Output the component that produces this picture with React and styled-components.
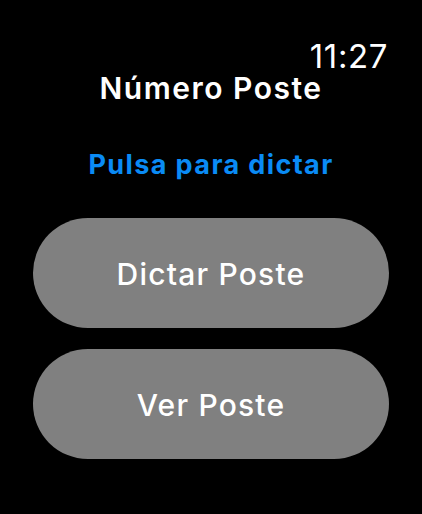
import React from "react";
import styled, { createGlobalStyle } from "styled-components";

const GlobalStyle = createGlobalStyle`
  html, body {
    margin: 0;
    padding: 0;
    background: #000;
  }
  body {
    font-family: Inter, "Noto Sans", sans-serif;
  }
`;

function App() {
  return (
    <>
      <GlobalStyle />
      <Screen>
        <StatusBar>
          <Time>11:27</Time>
        </StatusBar>
        <Title>Número Poste</Title>
        <Hint>Pulsa para dictar</Hint>
        <Actions>
          <PillButton>Dictar Poste</PillButton>
          <PillButton>Ver Poste</PillButton>
        </Actions>
      </Screen>
    </>
  );
}

export default App;

const Screen = styled.div`
  width: 422px;
  height: 514px;
  background: #000;
  color: #fff;
  display: flex;
  flex-direction: column;
  box-sizing: border-box;
  padding-top: 40px;
  overflow: hidden;
`;

const StatusBar = styled.div`
  display: flex;
  justify-content: flex-end;
  padding-right: 34px;
`;

const Time = styled.span`
  font-size: 33px;
  line-height: 33px;
  font-weight: 400;
  letter-spacing: 0.6px;
`;

const Title = styled.h1`
  margin: -3px 0 0;
  text-align: center;
  font-size: 30px;
  font-weight: 600;
  line-height: normal;
  letter-spacing: 1.5px;
`;

const Hint = styled.div`
  margin-top: 42px;
  text-align: center;
  font-size: 27px;
  font-weight: 700;
  color: #0a8bf5;
  line-height: normal;
  letter-spacing: 1.4px;
`;

const Actions = styled.div`
  margin-top: 37px;
  padding: 0 33px;
  display: flex;
  flex-direction: column;
  gap: 21px;
`;

const PillButton = styled.button`
  height: 110px;
  padding: 2px 0 0;
  border: none;
  border-radius: 55px;
  background: #808080;
  color: #fff;
  font-family: Inter, "Noto Sans", sans-serif;
  font-size: 30px;
  font-weight: 500;
  letter-spacing: 1.2px;
  cursor: pointer;
`;
